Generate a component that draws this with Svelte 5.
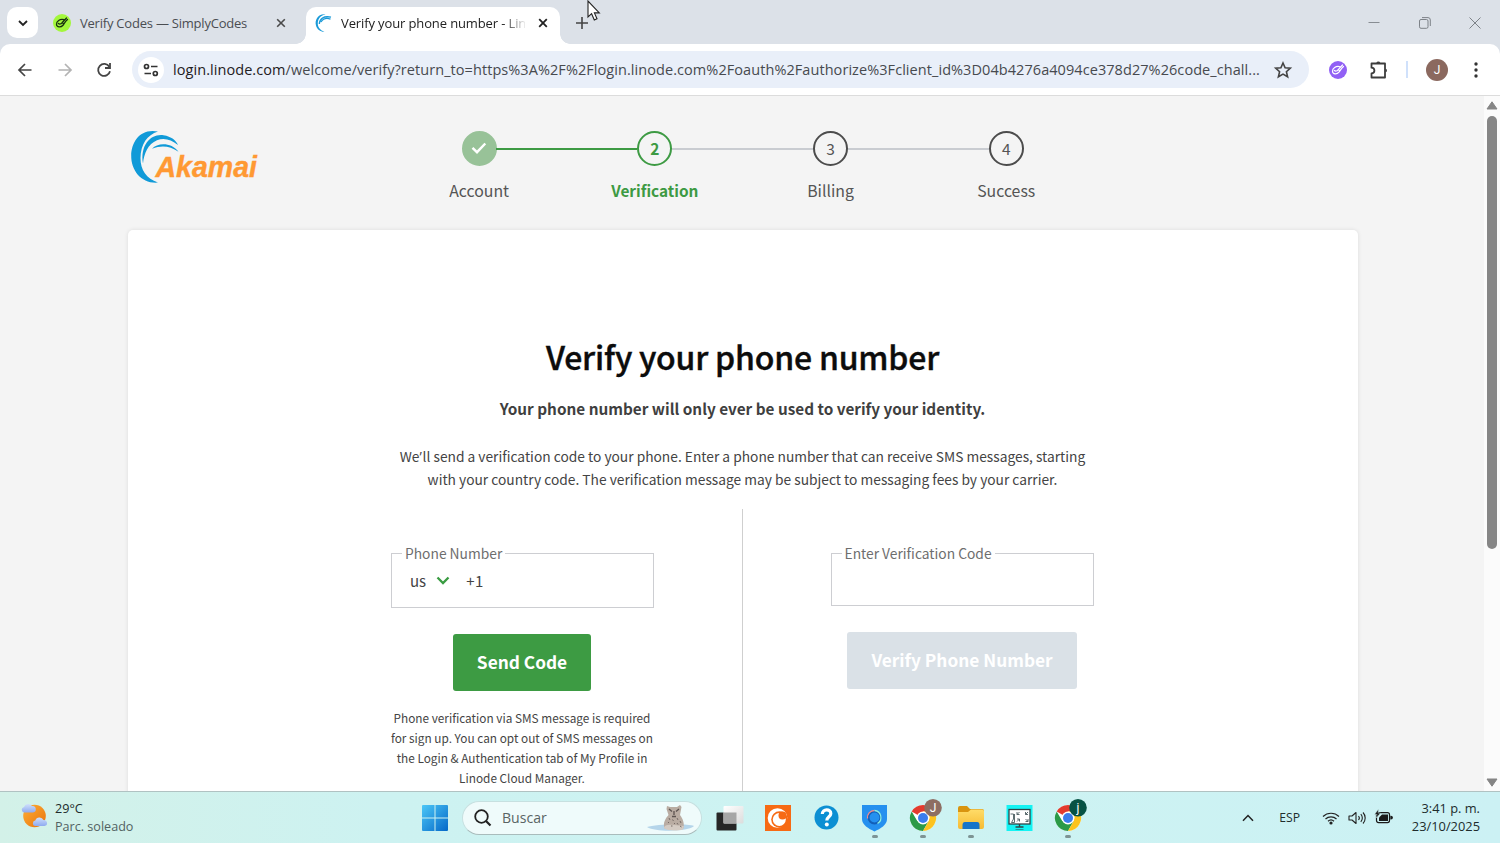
<script>
  const steps = [
    { n: '1', label: 'Account', state: 'done' },
    { n: '2', label: 'Verification', state: 'current' },
    { n: '3', label: 'Billing', state: 'next' },
    { n: '4', label: 'Success', state: 'next' }
  ];
</script>

{#snippet chrome(letter, color)}
  <span class="app running">
    <svg width="34" height="34" viewBox="0 0 34 34">
      <circle cx="17" cy="17" r="13" fill="#fff" />
      <path d="M17 17 5.700 10.500A13 13 0 0 1 28.300 10.500H17Z" fill="#e33b2e" />
      <path d="M5.700 10.500A13 13 0 0 0 17 30L22.600 20.300 17 17 11.400 20.300Z" fill="#2b9a47" />
      <path d="M28.300 10.500A13 13 0 0 1 17 30L22.600 20.300 23.500 16 17 10.500Z" fill="#fcc31e" />
      <circle cx="17" cy="17" r="6.400" fill="#fff" />
      <circle cx="17" cy="17" r="5" fill="#3b7ded" />
      <circle cx="27" cy="6.800" r="8.800" fill={color} />
      <text x="27" y="11" text-anchor="middle" font-size="12" fill="#fff" font-family="Roboto, sans-serif">{letter}</text>
    </svg>
  </span>
{/snippet}

<div class="screen">
  <div class="tabs">
    <button class="tabsearch" aria-label="Tabs"><svg width="12" height="12" viewBox="0 0 12 12"><path d="M2 4 6 8 10 4" fill="none" stroke="#222" stroke-width="1.800" /></svg></button>
    <div class="tab">
      <svg class="fav" width="18" height="18" viewBox="0 0 18 18"><circle cx="9" cy="9" r="9" fill="#a3f73c" /><path d="M11 5.700C7 4.500 3.200 7.500 3.500 10.500s4.500 3 6.500.7C11.300 9.700 12 7.500 14.500 5.500M5.500 9.500c1 1 2.500.500 3.500-.7L13.500 4M9 8.700l1.500.8" fill="none" stroke="#18310f" stroke-width="1.300" stroke-linecap="round" /></svg>
      <span class="ttl">Verify Codes — SimplyCodes</span>
      <svg class="x" width="10" height="10" viewBox="0 0 10 10"><path d="M1.200 1.200 8.800 8.800M8.800 1.200 1.200 8.800" stroke="#4a4a4a" stroke-width="1.600" /></svg>
    </div>
    <div class="tab active">
      <svg class="fav" width="18" height="18" viewBox="0 0 18 18"><path d="M10.500.4C3-.5-.5 6 1 11.500 2 15.500 5.500 18 9.500 17.800 4.500 16 2.500 12.500 2.800 8.500 3 4.500 6 1 10.500.4Z" fill="#1a9ad8" /><path d="M4.300 10C4.500 5 8.500 1.500 16 3.200M6 8C8 5 11.500 3.500 15.500 5.200" fill="none" stroke="#1a9ad8" stroke-width="1.300" /></svg>
      <span class="ttl fade">Verify your phone number - Line</span>
      <svg class="x" width="10" height="10" viewBox="0 0 10 10"><path d="M1.200 1.200 8.800 8.800M8.800 1.200 1.200 8.800" stroke="#222" stroke-width="1.800" /></svg>
    </div>
    <svg class="plus" width="12" height="12" viewBox="0 0 12 12"><path d="M6 0V12M0 6H12" stroke="#444" stroke-width="1.600" /></svg>
    <div class="winbtns">
      <svg width="12" height="12" viewBox="0 0 12 12"><path d="M.5 5.500H11.500" stroke="#888d93" /></svg>
      <svg width="12" height="12" viewBox="0 0 12 12"><rect x=".5" y="2.500" width="8.500" height="8.800" rx="1.500" fill="none" stroke="#7d8288" /><path d="M3 .6H9A2.300 2.300 0 0 1 11.300 3V9" fill="none" stroke="#7d8288" /></svg>
      <svg width="12" height="12" viewBox="0 0 12 12"><path d="M.5.5 11.500 11.500M11.500.5.5 11.500" stroke="#7d8288" /></svg>
    </div>
  </div>
  <svg class="cursor" width="14" height="22" viewBox="0 0 14 22"><path d="M1 1V17L4.600 13.700 7.300 20 10 18.800 7.400 12.900H12.300Z" fill="#fff" stroke="#222" stroke-width="1.100" /></svg>

  <div class="toolbar">
    <div class="nav">
      <svg width="16" height="16" viewBox="0 0 16 16"><path d="M14.500 8H2.500M8 2 2 8 8 14" fill="none" stroke="#444" stroke-width="1.700" /></svg>
      <svg width="16" height="16" viewBox="0 0 16 16"><path d="M1.500 8H13.500M8 2 14 8 8 14" fill="none" stroke="#b3b3b3" stroke-width="1.700" /></svg>
      <svg width="16" height="16" viewBox="0 0 16 16"><path d="M13.300 4.800A6 6 0 1 0 14 9.300" fill="none" stroke="#444" stroke-width="1.800" /><path d="M14 1V6H9" fill="none" stroke="#444" stroke-width="1.800" /></svg>
    </div>
    <div class="omni">
      <span class="site"><svg width="16" height="14" viewBox="0 0 16 14"><g fill="none" stroke="#333" stroke-width="1.700"><circle cx="3.500" cy="3.500" r="2" /><path d="M8 3.500H14.500M1.500 10.500H8" /><circle cx="12.300" cy="10.500" r="2" /></g></svg></span>
      <span class="url"><b>login.linode.com</b>/welcome/verify?return_to=https%3A%2F%2Flogin.linode.com%2Foauth%2Fauthorize%3Fclient_id%3D04b4276a4094ce378d27%26code_chall...</span>
      <svg class="star" width="18" height="18" viewBox="0 0 18 18"><path d="M9 2 11.100 6.800 16.300 7.200 12.400 10.700 13.600 15.800 9 13.100 4.400 15.800 5.600 10.700 1.700 7.200 6.900 6.800Z" fill="none" stroke="#444" stroke-width="1.600" /></svg>
    </div>
    <svg class="ext" width="18" height="18" viewBox="0 0 18 18"><circle cx="9" cy="9" r="9" fill="#9160f5" /><path d="M11 5.700C7 4.500 3.200 7.500 3.500 10.500s4.500 3 6.500.7C11.300 9.700 12 7.500 14.500 5.500M5.500 9.500c1 1 2.500.500 3.500-.7L13.500 4M9 8.700l1.500.8" fill="none" stroke="#fff" stroke-width="1.200" stroke-linecap="round" /></svg>
    <svg class="puz" width="20" height="20" viewBox="0 0 20 20"><path d="M2.500 3.500H16V17.500H2.500V13.500A2.900 2.900 0 0 0 2.500 7.700Z" fill="none" stroke="#3c3c3c" stroke-width="1.800" stroke-linejoin="round" /><path d="M7.300 3A2.100 2.100 0 0 1 11.300 3ZM16.500 8.500A2.100 2.100 0 0 1 16.500 12.500Z" fill="#3c3c3c" /></svg>
    <span class="sep"></span>
    <span class="avatar">J</span>
    <svg class="dots" width="4" height="16" viewBox="0 0 4 16"><g fill="#333"><circle cx="2" cy="2" r="1.700" /><circle cx="2" cy="8" r="1.700" /><circle cx="2" cy="14" r="1.700" /></g></svg>
  </div>

  <div class="view">
    <main>
      <header>
        <svg class="logo" width="130" height="56" viewBox="0 0 130 56">
          <g fill="#109ad8">
            <path d="M28 1.500C10-2 1.500 12 1.200 25.500 1 41 12 54 28 52.600 16.500 48.500 10.300 40 10.500 28 10.800 14 17 5 28 1.500Z" />
            <path d="M13 33.500C10 15 21 3.500 33.500 5.300 41.500 6.500 46 10.500 48 15 41 9.500 34 7.500 27 10.300 18 14 14 23.500 13 33.500Z" />
            <path d="M22 18.700C28 12 42 12.500 48.500 21.800 40 16 32 14.800 22 18.700Z" />
          </g>
          <text x="25.500" y="46.500" textLength="101.500" lengthAdjust="spacingAndGlyphs" font-family="'Liberation Sans', Arial, sans-serif" font-weight="700" font-style="italic" font-size="29" fill="#ff9933" stroke="#ff9933" stroke-width=".4">Akamai</text>
        </svg>
        <ol>
          {#each steps as s}
            <li class={s.state}>
              <span class="dot">
                {#if s.state === 'done'}<svg width="16" height="12" viewBox="0 0 16 12"><path d="M1.500 5.800 6 10.200 14.300 1.500" fill="none" stroke="#fff" stroke-width="2.400" /></svg>{:else}{s.n}{/if}
              </span>
              <span class="lbl">{s.label}</span>
            </li>
          {/each}
        </ol>
      </header>
      <section class="card">
        <h1>Verify your phone number</h1>
        <h2>Your phone number will only ever be used to verify your identity.</h2>
        <p class="lead">We<span class="apos">’</span>ll send a verification code to your phone. Enter a phone number that can receive SMS messages, starting<br />with your country code. The verification message may be subject to messaging fees by your carrier.</p>
        <div class="cols">
          <div class="col left">
            <div class="field phone">
              <span class="legend">Phone Number</span>
              <span class="cc">us</span>
              <svg width="14" height="9" viewBox="0 0 14 9"><path d="M1.500 1.500 7 7 12.500 1.500" fill="none" stroke="#3a9c42" stroke-width="2.300" /></svg>
              <span class="pre">+1</span>
            </div>
            <button class="send">Send Code</button>
            <p class="small">Phone verification via SMS message is required<br />for sign up. You can opt out of SMS messages on<br />the Login &amp; Authentication tab of My Profile in<br />Linode Cloud Manager.</p>
          </div>
          <div class="col right">
            <div class="field code"><span class="legend">Enter Verification Code</span></div>
            <button class="verify">Verify Phone Number</button>
          </div>
        </div>
      </section>
    </main>
    <div class="scroll">
      <svg width="12" height="9" viewBox="0 0 12 9"><path d="M6 .8 11 8H1Z" fill="#858585" stroke="#858585" stroke-linejoin="round" /></svg>
      <span class="thumb"></span>
      <svg width="12" height="9" viewBox="0 0 12 9"><path d="M6 8.200 11 1H1Z" fill="#858585" stroke="#858585" stroke-linejoin="round" /></svg>
    </div>
  </div>

  <footer>
    <div class="weather">
      <svg width="28" height="28" viewBox="0 0 28 28">
        <defs><linearGradient id="sun" x2="1" y2="1"><stop stop-color="#ffae35" /><stop offset="1" stop-color="#e8730c" /></linearGradient><linearGradient id="cl" x2="0" y2="1"><stop stop-color="#cfe0fb" /><stop offset="1" stop-color="#8faaf0" /></linearGradient></defs>
        <circle cx="14.500" cy="14" r="11.300" fill="url(#sun)" />
        <path d="M4 10.500A2.800 2.800 0 0 1 4 5 4.500 4.500 0 0 1 12 4 3.200 3.200 0 0 1 13 10.500Z" fill="url(#cl)" />
        <path d="M15 24A2.800 2.800 0 0 1 15.300 18.500 4.400 4.400 0 0 1 23.500 18 3 3 0 0 1 24.500 24Z" fill="url(#cl)" />
      </svg>
      <div class="wtext"><span class="deg">29°C</span><span class="cond">Parc. soleado</span></div>
    </div>
    <div class="apps">
      <svg class="win" width="26" height="26" viewBox="0 0 26 26">
        <defs><linearGradient id="w" x2="1" y2="1"><stop stop-color="#4cc7f7" /><stop offset="1" stop-color="#0468c8" /></linearGradient></defs>
        <path d="M0 1a1 1 0 0 1 1-1H12.500V12.500H0ZM13.500 0H25a1 1 0 0 1 1 1V12.500H13.500ZM0 13.500H12.500V26H1a1 1 0 0 1-1-1ZM13.500 13.500H26V25a1 1 0 0 1-1 1H13.500Z" fill="url(#w)" />
      </svg>
      <div class="search">
        <svg width="18" height="18" viewBox="0 0 18 18"><circle cx="7.500" cy="7.500" r="6.300" fill="none" stroke="#222" stroke-width="1.800" /><path d="M12 12 16.500 16.500" stroke="#222" stroke-width="2.200" /></svg>
        <span class="busc">Buscar</span>
        <svg class="leopard" width="48" height="30" viewBox="0 0 48 30">
          <path d="M0 24C8 21 40 20 47 23 43 28 10 30 0 24Z" fill="#b5d5ea" />
          <path d="M18 26C15 20 19 15 21.500 12L19.500 6 20 3 23 4H30L33 2 34.500 4 33 12C36 16 38 21 36 26Z" fill="#b9aca2" />
          <path d="M17 25C17 22 22 21 27 22L37 23 36 26.500C30 28 20 28 17 25Z" fill="#d4cbc3" />
          <path d="M22 6 25 8.500M32 6 29 8.500M27 8V12M25 13.500H29" stroke="#5c5350" stroke-width="1.300" fill="none" />
          <path d="M22 15 23 17M25.500 16.500 26.500 18M30 15 31 17M33 18 34 20M21 19 22 20M24 23H25.500M30 20 31 21.500M33 23 34.500 24M27 20.500H28" stroke="#776c67" stroke-width="1" />
        </svg>
      </div>
      <span class="app"><svg width="34" height="34" viewBox="0 0 34 34"><defs><linearGradient id="tv" x2="1" y2="1"><stop stop-color="#fff" /><stop offset="1" stop-color="#dcdcdc" /></linearGradient></defs><rect x="3.500" y="11.500" width="20" height="18" rx="1" fill="#262626" /><rect x="10.500" y="5" width="20" height="17.500" rx="1" fill="url(#tv)" /><path d="M10.500 11.500H23.500V22.500H10.500Z" fill="#a6a6a6" /></svg></span>
      <span class="app"><svg width="34" height="34" viewBox="0 0 34 34"><rect x="4" y="4" width="26" height="26" fill="#f76a14" /><circle cx="16.500" cy="17" r="9.800" fill="#fff" /><circle cx="18.500" cy="18.500" r="8.300" fill="#f76a14" /><circle cx="18.300" cy="18.500" r="6.500" fill="#fff" /><circle cx="21.500" cy="14.500" r="4" fill="#f76a14" /></svg></span>
      <span class="app"><svg width="34" height="34" viewBox="0 0 34 34"><circle cx="16.500" cy="16.500" r="12" fill="#0c8fd3" /><path d="M12.300 13C12.300 7.500 21 7.500 20.800 12.700 20.700 15.700 16.800 15.800 16.800 19.500" fill="none" stroke="#fff" stroke-width="3.200" /><circle cx="16.800" cy="23.500" r="2" fill="#fff" /></svg></span>
      <span class="app running"><svg width="34" height="34" viewBox="0 0 34 34"><path d="M4 4H29V18C29 24 22.500 27.500 16.500 30.500 10.500 27.500 4 24 4 18Z" fill="#2590ef" /><circle cx="16.500" cy="16.500" r="6" fill="none" stroke="#135fb8" stroke-width="2" /><path d="M9.500 17.500A7 7 0 0 1 16.500 9.500" fill="none" stroke="#f58b8b" stroke-width="1.300" /><path d="M16.500 9.500A7 7 0 0 1 19.500 22.500" fill="none" stroke="#8df0e2" stroke-width="1.300" /></svg></span>
      {@render chrome('J', '#8d6e63')}
      <span class="app running"><svg width="34" height="34" viewBox="0 0 34 34"><defs><linearGradient id="f" x2="0" y2="1"><stop stop-color="#ffdc69" /><stop offset="1" stop-color="#f6bb32" /></linearGradient></defs><path d="M4 7Q4 5 6 5H13L16 8H28Q30 8 30 10V14H4Z" fill="#d9940f" /><path d="M4 11H14L17 8.500H28Q30 8.500 30 10.500V26Q30 28 28 28H6Q4 28 4 26Z" fill="url(#f)" /><path d="M8.500 28V24Q8.500 21 11 21H23Q25.500 21 25.500 24V28Z" fill="#1674c9" /></svg></span>
      <span class="app"><svg width="34" height="34" viewBox="0 0 34 34"><rect x="3.500" y="4" width="26" height="26" fill="#14f3f3" /><rect x="6" y="8.500" width="21" height="14.500" fill="#fff" stroke="#304448" stroke-width="1.300" /><path d="M12.500 26H20.500M16.500 23V26" stroke="#304448" stroke-width="1.400" /><path d="M7.500 13H10.500V18L8.500 21.500H11.500V13M14 11V13.500H16.500M14 13.500 16.500 11M22.500 11V13.500H25M22.500 13.500 25 11M14 20.500 16.500 18M14 18H16.500V20.500M22.500 18 25 20.500M22.500 20.500H25V18" fill="none" stroke="#4b5c60" stroke-width=".9" /><path d="M12.500 28.500H20.500" stroke="#219ca0" /></svg></span>
      {@render chrome('j', '#075244')}
    </div>
    <div class="tray">
      <svg class="up" width="12" height="8" viewBox="0 0 12 8"><path d="M1 6.800 6 1.500 11 6.800" fill="none" stroke="#222" stroke-width="1.500" /></svg>
      <span class="esp">ESP</span>
      <svg class="wifi" width="18" height="14" viewBox="0 0 18 14"><g fill="none" stroke="#222" stroke-width="1.200"><path d="M1 5.500A11.500 11.500 0 0 1 17 5.500" /><path d="M3.500 8A8 8 0 0 1 14.500 8" /><path d="M6 10.300A4.500 4.500 0 0 1 12 10.300" /></g><circle cx="9" cy="12" r="1.600" fill="#222" /></svg>
      <svg class="vol" width="19" height="14" viewBox="0 0 19 14"><g fill="none" stroke="#222" stroke-width="1.100"><path d="M1 5H4L8 1.500V12.500L4 9H1Z" stroke-linejoin="round" /><path d="M10.500 5A3 3 0 0 1 10.500 9M12.800 3.200A5.500 5.500 0 0 1 12.800 10.800M15 1.500A8 8 0 0 1 15 12.500" /></g></svg>
      <svg class="bat" width="19" height="15" viewBox="0 0 19 15"><rect x="2.500" y="2.600" width="13" height="10" rx="2" fill="none" stroke="#1b1b1b" stroke-width="1.200" /><path d="M5 11V7.500L8 4.500H14V11Z" fill="#1b1b1b" /><path d="M16.300 5.700H17A1.200 1.200 0 0 1 17 9.500H16.300Z" fill="#1b1b1b" /><path d="M4.500-1 .5 4.500H3L2.500 8 6.500 3H4.200Z" fill="#1b1b1b" stroke="#cdf1f1" stroke-width=".5" /></svg>
      <div class="clock"><span>3:41 p. m.</span><span>23/10/2025</span></div>
    </div>
  </footer>
</div>

<style>
  :global(body) { margin: 0; overflow: hidden; }
  .screen { position: relative; width: 1500px; height: 843px; overflow: hidden; display: flex; flex-direction: column; background: #dce1e8; font-family: 'Open Sans', 'Noto Sans', sans-serif; box-sizing: border-box; }
  .screen :global(*) { box-sizing: border-box; }
  svg { display: block; flex: none; overflow: visible; }
  button { border: 0; padding: 0; }
  h1, h2, p, ol { margin: 0; padding: 0; }

  .tabs { height: 44px; flex: none; display: flex; padding: 7px 0 0 7px; }
  .tabsearch { width: 31px; height: 31px; border-radius: 10px; background: #fff; display: grid; place-items: center; }
  .tab { height: 37px; display: flex; align-items: center; padding: 0 0 5px 9px; width: 254px; margin-left: 6px; }
  .tab.active { background: #fff; border-radius: 10px 10px 0 0; position: relative; margin-left: 8px; }
  .tab.active::before, .tab.active::after { content: ''; position: absolute; bottom: 0; width: 10px; height: 10px; }
  .tab.active::before { left: -10px; background: radial-gradient(circle at 0 0, transparent 9.500px, #fff 10px); }
  .tab.active::after { right: -10px; background: radial-gradient(circle at 100% 0, transparent 9.500px, #fff 10px); }
  .ttl { margin-left: 9px; width: 184px; white-space: nowrap; font-size: 13px; letter-spacing: -.22px; line-height: 20px; color: #4a4d52; flex: none; }
  .tab:not(.active) .ttl { width: 196px; }
  .ttl.fade { color: #222; mask-image: linear-gradient(90deg, #000 162px, transparent 186px); margin-left: 8px; letter-spacing: -.12px; }
  .x { margin-left: 13px; }
  .tab:not(.active) .x { margin-left: 0; }
  .plus { margin: 10px 0 0 16px; }
  .winbtns { margin-left: auto; display: flex; gap: 38.500px; padding: 10px 19px 0 0; }
  .cursor { position: absolute; left: 587px; top: 0; }

  .toolbar { height: 52px; flex: none; background: #fff; border-radius: 10px 10px 0 0; border-bottom: 1px solid #dcdcdc; display: flex; align-items: center; }
  .nav { display: flex; gap: 23.500px; margin-left: 17px; width: 115px; }
  .omni { width: 1177px; height: 37px; border-radius: 19px; background: #e9eff9; display: flex; align-items: center; padding-left: 6px; }
  .site { width: 26px; height: 26px; border-radius: 50%; background: #fff; display: grid; place-items: center; }
  .url { margin-left: 9px; width: 1101px; white-space: nowrap; font-size: 14.500px; letter-spacing: .065px; line-height: 20px; color: #474a4f; }
  .url b { font-weight: 400; color: #1f2023; }
  .ext { margin-left: 20px; }
  .puz { margin-left: 22px; }
  .sep { width: 2px; height: 17px; background: #d0e1fb; margin-left: 17px; }
  .avatar { width: 22px; height: 22px; border-radius: 50%; background: #8b695f; color: #fff; font: 12px/22px Roboto, sans-serif; text-align: center; margin-left: 18px; }
  .dots { margin-left: 26px; }

  .view { height: 695px; flex: none; display: flex; background: #f4f4f4; overflow: hidden; font-family: 'Noto Sans CJK SC', sans-serif; }
  main { width: 1484px; padding: 34px 126px 0 128px; }
  header { display: flex; height: 100px; }
  .logo { margin: 0 0 0 2px; }
  ol { list-style: none; display: flex; margin-left: 131.300px; }
  li { width: 175.700px; display: flex; flex-direction: column; align-items: center; position: relative; color: #555; }
  li:not(:last-child)::after { content: ''; position: absolute; top: 18px; left: 105px; width: 141px; height: 2px; background: #c9ccd1; }
  li.done::after { background: #3d9a43 !important; }
  .dot { width: 35px; height: 35px; border: 2px solid #4c4c4c; border-radius: 50%; display: grid; place-items: center; font-size: 15.500px; line-height: 20px; margin-top: 1px; padding-bottom: 2px; }
  .done .dot { background: #98c298; border-color: #98c298; }
  .current .dot { border-color: #3d9a43; font-weight: 700; }
  .current { color: #3d9a43; }
  .lbl { margin-top: 14px; font-size: 15.850px; line-height: 22px; }
  .current .lbl { margin-top: 13px; font-weight: 700; font-size: 15.400px; }
  .card { height: 640px; background: #fff; border-radius: 5px; box-shadow: 0 0 4px rgba(0, 0, 0, .1); text-align: center; color: #444; padding-top: 103px; }
  h1, h2, .lead { margin-right: 1px; }
  h1 { font-size: 32px; letter-spacing: -.2px; line-height: 46px; font-weight: 500; color: #0c0c0c; -webkit-text-stroke: .4px #0c0c0c; }
  h2 { margin-top: 17px; font-size: 15.300px; line-height: 24px; font-weight: 600; color: #3f3f3f; }
  .lead { margin-top: 25px; font-size: 13.770px; line-height: 23px; }
  .apos { font-family: 'Open Sans', sans-serif; line-height: 1; letter-spacing: .7px; }
  .cols { display: grid; grid-template-columns: 615px 615px; margin-top: 18px; height: 300px; }
  .col { display: flex; flex-direction: column; padding-top: 44px; }
  .left { width: 615px; border-right: 1px solid #cfcfcf; align-items: flex-start; padding-left: 263px; }
  .right { padding-left: 88px; align-items: flex-start; }
  .field { width: 263px; border: 1px solid #cdced2; position: relative; display: flex; align-items: center; font-size: 15px; line-height: 20px; }
  .phone { height: 55px; padding: 0 0 0 18px; }
  .code { height: 53px; }
  .legend { position: absolute; left: 10px; top: -11px; background: #fff; padding: 0 3px; font-size: 13.800px; line-height: 20px; color: #6e6e6e; }
  .code .legend { padding-left: 2.500px; }
  .phone svg { margin: 0 0 1px 10px; }
  .pre { margin-left: 16px; letter-spacing: .5px; }
  .send, .verify { font: 700 17.300px/26px 'Noto Sans CJK SC', sans-serif; color: #fff; border-radius: 3px; height: 57px; padding-bottom: 1px; }
  .send { width: 138px; background: #3d9b43; margin: 26px 0 0 62px; }
  .verify { width: 230px; background: #dae1e7; margin: 26px 0 0 16px; }
  .small { width: 262px; font-size: 11.800px; line-height: 19.800px; margin-top: 17.400px; white-space: nowrap; }
  .scroll { width: 16px; background: #fbfbfb; display: flex; flex-direction: column; align-items: center; padding: 5px 0 4px; }
  .thumb { width: 10px; height: 433px; border-radius: 5px; background: #868686; margin: 6px 0 auto; }

  footer { height: 52px; flex: none; border-top: 1px solid #b0c2c2; background: linear-gradient(90deg, #d3f1e8, #cdf2f1 25%, #cdf3f2 60%, #ccf1f4); display: flex; position: relative; }
  .weather { display: flex; padding: 10px 0 0 20px; width: 421px; }
  .wtext { margin: -2px 0 0 7px; display: flex; flex-direction: column; align-items: flex-start; font-size: 12.600px; line-height: 17.500px; color: #202c2c; }
  .cond { color: #526262; }
  .apps { display: flex; align-items: center; }
  .win { margin-left: 1px; }
  .search { width: 240px; height: 34px; border-radius: 17px; background: #effbfb; border: 1px solid #c7e0e0; border-bottom-color: #a9bcbc; margin: 0 11px 0 14px; display: flex; align-items: center; padding-left: 11px; font-size: 14.100px; color: #596464; }
  .busc { margin-left: 10px; }
  .leopard { margin-left: 100px; }
  .app { width: 34px; height: 34px; margin-right: 14.300px; position: relative; }
  .running::after { content: ''; position: absolute; left: 14px; top: 34px; width: 6px; height: 3px; border-radius: 2px; background: #7d9494; }
  .tray { margin-left: auto; display: flex; align-items: center; padding-right: 20px; font-size: 12.200px; color: #202c2c; }
  .esp { margin-left: 25px; }
  .wifi { margin-left: 22px; }
  .vol { margin-left: 8px; }
  .bat { margin-left: 7px; }
  .clock { width: 87px; display: flex; flex-direction: column; align-items: flex-end; font-size: 12.850px; line-height: 17.500px; }
</style>
